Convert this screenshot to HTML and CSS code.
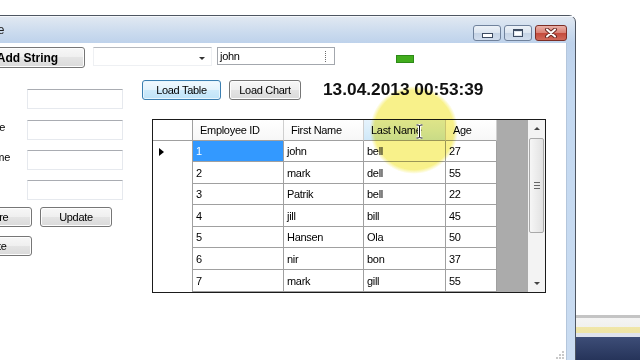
FILE: index.html
```html
<!doctype html>
<html>
<head>
<meta charset="utf-8">
<link rel="stylesheet" href="styles.css">
</head>
<body>
<div class="behind"></div>
<div class="window">
  <div class="titlebar">
    <span class="title">Employee</span>
    <div class="caption">
      <span class="cap cap-min"><i></i></span>
      <span class="cap cap-max"><i></i></span>
      <span class="cap cap-close">
        <svg width="14" height="10" viewBox="0 0 14 10">
          <path d="M3 1.5 L11 8.5 M11 1.5 L3 8.5" stroke="#6b2a24" stroke-width="4" stroke-linecap="round"/>
          <path d="M3 1.5 L11 8.5 M11 1.5 L3 8.5" stroke="#fff" stroke-width="2" stroke-linecap="round"/>
        </svg>
      </span>
    </div>
  </div>
  <div class="client">
    <div class="toprow">
      <button class="btn btn-add">Add String</button>
      <div class="combo"><span class="combo-arrow"></span></div>
      <div class="textbox tb-john">john<span class="caret"></span></div>
      <span class="led"></span>
    </div>
    <div class="main">
      <div class="editor">
        <div class="fields">
          <span class="lbl"></span><div class="textbox tb-field"></div>
          <span class="lbl lbl-first">First Name</span><div class="textbox tb-field"></div>
          <span class="lbl lbl-last">Last Name</span><div class="textbox tb-field"></div>
          <span class="lbl"></span><div class="textbox tb-field"></div>
        </div>
        <div class="actions">
          <button class="btn">Store</button>
          <button class="btn">Update</button>
          <button class="btn btn-delete">Delete</button>
        </div>
      </div>
      <div class="viewer">
        <div class="toolbar">
          <button class="btn btn-focus btn-table">Load Table</button>
          <button class="btn btn-chart">Load Chart</button>
          <span class="clock">13.04.2013 00:53:39</span>
        </div>
        <div class="dgv">
          <div class="dgv-cells">
            <div class="cell rh hd-corner"></div>
            <div class="cell hd">Employee ID</div>
            <div class="cell hd">First Name</div>
            <div class="cell hd hd-hover">Last Name</div>
            <div class="cell hd">Age</div>

            <div class="cell rh"><span class="row-arrow"></span></div>
            <div class="cell sel">1</div><div class="cell">john</div><div class="cell">bell</div><div class="cell">27</div>
            <div class="cell rh"></div>
            <div class="cell">2</div><div class="cell">mark</div><div class="cell">dell</div><div class="cell">55</div>
            <div class="cell rh"></div>
            <div class="cell">3</div><div class="cell">Patrik</div><div class="cell">bell</div><div class="cell">22</div>
            <div class="cell rh"></div>
            <div class="cell">4</div><div class="cell">jill</div><div class="cell">bill</div><div class="cell">45</div>
            <div class="cell rh"></div>
            <div class="cell">5</div><div class="cell">Hansen</div><div class="cell">Ola</div><div class="cell">50</div>
            <div class="cell rh"></div>
            <div class="cell">6</div><div class="cell">nir</div><div class="cell">bon</div><div class="cell">37</div>
            <div class="cell rh"></div>
            <div class="cell">7</div><div class="cell">mark</div><div class="cell">gill</div><div class="cell">55</div>
          </div>
          <div class="dgv-empty"></div>
          <div class="vscroll">
            <div class="sb-btn"><span class="sb-up"></span></div>
            <div class="sb-track">
              <div class="sb-thumb"><span class="grip-lines"></span></div>
            </div>
            <div class="sb-btn"><span class="sb-down"></span></div>
          </div>
          <div class="highlight"></div>
          <svg class="ibeam" width="9" height="15" viewBox="0 0 9 15">
            <path d="M1.5 1 H3.5 L4.5 2 L5.5 1 H7.5 M4.5 2 V13 M1.5 14 H3.5 L4.5 13 L5.5 14 H7.5" fill="none" stroke="#fff" stroke-width="3"/>
            <path d="M1.5 1 H3.5 L4.5 2 L5.5 1 H7.5 M4.5 2 V13 M1.5 14 H3.5 L4.5 13 L5.5 14 H7.5" fill="none" stroke="#111" stroke-width="1"/>
          </svg>
        </div>
      </div>
    </div>
    <svg class="sizegrip" width="10" height="10" viewBox="0 0 10 10">
      <rect x="7" y="1" width="2" height="2" fill="#c9c9c9"/>
      <rect x="4" y="4" width="2" height="2" fill="#c9c9c9"/>
      <rect x="7" y="4" width="2" height="2" fill="#c9c9c9"/>
      <rect x="1" y="7" width="2" height="2" fill="#c9c9c9"/>
      <rect x="4" y="7" width="2" height="2" fill="#c9c9c9"/>
      <rect x="7" y="7" width="2" height="2" fill="#c9c9c9"/>
    </svg>
  </div>
</div>
</body>
</html>
```

FILE: styles.css
```css
html, body {
    margin: 0;
    padding: 0;
}
body {
    position: relative;
    width: 640px;
    height: 360px;
    overflow: hidden;
    background: #fff;
    font-family: "Liberation Sans", Arial, sans-serif;
    font-size: 11px;
    letter-spacing: -0.3px;
    color: #000;
}

/* the other window peeking out at the bottom right */
.behind {
    position: absolute;
    left: 576px;
    top: 315px;
    right: 0;
    bottom: 0;
    background: linear-gradient(#c4c4c4 0, #c4c4c4 3px, #f4f4f4 3px, #f1f1ee 12px, #f0e6a8 12px, #eee4a6 18px, #dfe3ec 18px, #dfe3ec 22px, #3d4d77 22px, #26345a 100%);
}

.window {
    position: absolute;
    left: -9px;
    top: 15px;
    width: 583px;
    height: 345px;
    border: 1px solid #4e5662;
    border-radius: 0 7px 0 0;
    background: linear-gradient(#e2e9f2 0, #cbdbee 16px, #bed2eb 27px, #c4d9f1 80px, #cadcf1 100%);
    display: flex;
    flex-direction: column;
}
.titlebar {
    height: 27px;
    display: flex;
    align-items: flex-start;
    border-top: 1px solid #f4f7fb;
    box-sizing: border-box;
}
.title {
    margin-left: -41px;
    margin-top: 6px;
    font-size: 12px;
    letter-spacing: 0;
    color: #1e1e1e;
}
.caption {
    margin-left: auto;
    margin-right: 8px;
    margin-top: 8px;
    display: flex;
    gap: 3px;
}
.cap {
    box-sizing: border-box;
    height: 16px;
    width: 28px;
    border: 1px solid #70829c;
    border-radius: 3px;
    background: linear-gradient(#edf2f8 0, #dce5f0 50%, #c5d3e5 50%, #d2deee 100%);
    display: flex;
    align-items: center;
    justify-content: center;
}
.cap-min i {
    display: block;
    width: 9px;
    height: 3px;
    margin-top: 5px;
    background: #fff;
    border: 1px solid #3d4b61;
}
.cap-max i {
    display: block;
    box-sizing: border-box;
    width: 10px;
    height: 8px;
    border: 1px solid #3d4b61;
    border-top-width: 2px;
    background: #fff;
    box-shadow: inset 0 0 0 1px #dfe6ef;
}
.cap-close {
    width: 32px;
    border-color: #7c2e26;
    background: linear-gradient(#eab1a8 0, #d97f73 50%, #c4493b 50%, #d0695a 100%);
}
.cap-close svg {
    display: block;
}

.client {
    flex: 1;
    margin: 0 8px 0 8px;
    background: #fff;
    position: relative;
    border-right: 1px solid #b4c6dc;
}

.toprow {
    display: flex;
    align-items: flex-start;
    margin-top: 4px;
    margin-left: -30px;
}
.btn {
    box-sizing: border-box;
    height: 20px;
    padding: 0;
    border: 1px solid #767676;
    border-radius: 3px;
    background: linear-gradient(#f7f7f7 0, #efefef 50%, #e4e4e4 50%, #dadada 100%);
    box-shadow: inset 0 0 0 1px #fdfdfd;
    font-family: inherit;
    font-size: 11px;
    letter-spacing: -0.3px;
    color: #000;
}
.btn-add {
    width: 115px;
    height: 21px;
    font-size: 12px;
    font-weight: bold;
    letter-spacing: 0;
}
.btn-focus {
    border-color: #3c7fb1;
    background: linear-gradient(#f2f9fe 0, #e3f3fd 50%, #cfebfb 50%, #bfe3f8 100%);
    box-shadow: inset 0 0 0 1px #e8f6fe;
}
.combo {
    box-sizing: border-box;
    width: 119px;
    height: 19px;
    margin-left: 8px;
    border: 1px solid #eef0f3;
    border-top-color: #b5b8bd;
    display: flex;
    align-items: center;
    justify-content: flex-end;
}
.combo-arrow {
    width: 0;
    height: 0;
    margin-right: 6px;
    margin-top: 4px;
    border-left: 3px solid transparent;
    border-right: 3px solid transparent;
    border-top: 3px solid #333;
}
.textbox {
    box-sizing: border-box;
    border: 1px solid #e6e9ee;
    border-top-color: #a9acb2;
    background: #fff;
}
.tb-john {
    width: 118px;
    height: 18px;
    margin-left: 5px;
    border-color: #a3a7ad;
    padding-left: 2px;
    display: flex;
    align-items: center;
}
.caret {
    margin-left: auto;
    margin-right: 8px;
    width: 0;
    height: 11px;
    border-left: 1px dotted #6d6d6d;
}
.led {
    box-sizing: border-box;
    width: 18px;
    height: 8px;
    margin-left: 61px;
    margin-top: 8px;
    background: #42ad1d;
    border: 1px solid #2d8a18;
}

.main {
    display: flex;
    gap: 19px;
    margin-top: 12px;
}
.editor {
    width: 163px;
    margin-left: -40px;
    padding-top: 9px;
}
.fields {
    display: grid;
    grid-template-columns: 67px 96px;
    grid-template-rows: 31px 30px 30px 20px;
}
.lbl {
    display: flex;
    justify-content: flex-end;
    align-items: flex-start;
    line-height: 14px;
    white-space: nowrap;
    min-width: 0;
}
.lbl-first {
    padding-right: 22px;
}
.lbl-last {
    padding-right: 17px;
}
.tb-field {
    height: 20px;
}
.actions {
    display: grid;
    grid-template-columns: 72px 72px;
    column-gap: 8px;
    row-gap: 9px;
    margin-top: 7px;
}
.btn-delete {
    padding-right: 9px;
}

.viewer {
    display: flex;
    flex-direction: column;
}
.toolbar {
    display: flex;
    align-items: center;
    height: 20px;
}
.btn-table {
    width: 79px;
}
.btn-chart {
    width: 72px;
    margin-left: 8px;
}
.clock {
    margin-left: 22px;
    margin-top: -1px;
    font-size: 17.3px;
    font-weight: bold;
    letter-spacing: 0;
    color: #111;
}

.dgv {
    position: relative;
    box-sizing: border-box;
    width: 394px;
    height: 174px;
    margin-top: 19px;
    margin-left: 10px;
    border: 1px solid #1b1b1b;
    display: flex;
}
.dgv-cells {
    display: grid;
    grid-template-columns: 40px 91px 80px 82px 51px;
    grid-template-rows: 21px 21px 22px 21px 22px 21px 22px 22px;
    background: #fff;
}
.cell {
    box-sizing: border-box;
    border-right: 1px solid #a0a0a0;
    border-bottom: 1px solid #a0a0a0;
    padding-left: 3px;
    display: flex;
    align-items: center;
    white-space: nowrap;
    overflow: hidden;
}
.cell.rh {
    border-bottom: none;
    padding-left: 6px;
}
.cell.hd-corner {
    border-bottom: 1px solid #a0a0a0;
}
.cell.hd {
    padding-left: 7px;
    border-right-color: #cfcfcf;
    background: linear-gradient(#ffffff, #f7f7f7);
}
.cell.hd-hover {
    background: linear-gradient(#e6f3fc, #cfe8f8);
}
.cell.sel {
    background: #3399ff;
    color: #fff;
}
.row-arrow {
    width: 0;
    height: 0;
    border-left: 5px solid #000;
    border-top: 4px solid transparent;
    border-bottom: 4px solid transparent;
}
.dgv-empty {
    width: 31px;
    background: #ababab;
}
.vscroll {
    flex: 1;
    display: flex;
    flex-direction: column;
    background: #f3f3f3;
}
.sb-btn {
    height: 17px;
    display: flex;
    align-items: center;
    justify-content: center;
}
.sb-up, .sb-down {
    width: 0;
    height: 0;
    border-left: 3px solid transparent;
    border-right: 3px solid transparent;
}
.sb-up {
    border-bottom: 3px solid #444;
}
.sb-down {
    border-top: 3px solid #444;
}
.sb-track {
    flex: 1;
}
.sb-thumb {
    box-sizing: border-box;
    height: 95px;
    margin: 1px 1px 0 1px;
    border: 1px solid #a9a9a9;
    border-radius: 2px;
    background: linear-gradient(90deg, #f6f6f6, #e2e2e2);
    display: flex;
    align-items: center;
    justify-content: center;
}
.grip-lines {
    width: 6px;
    height: 5px;
    border-top: 1px solid #666;
    border-bottom: 1px solid #666;
    background: linear-gradient(#666, #666) center / 100% 1px no-repeat;
}

/* cursor highlight and pointer, drawn over the grid */
.highlight {
    position: absolute;
    left: 217px;
    top: -34px;
    width: 88px;
    height: 88px;
    border-radius: 50%;
    background: radial-gradient(circle closest-side, #f8f18a 90%, rgba(248, 241, 138, 0) 100%);
    mix-blend-mode: multiply;
    pointer-events: none;
}
.ibeam {
    position: absolute;
    left: 262px;
    top: 4px;
}
.sizegrip {
    position: absolute;
    right: 1px;
    bottom: 1px;
}
```
